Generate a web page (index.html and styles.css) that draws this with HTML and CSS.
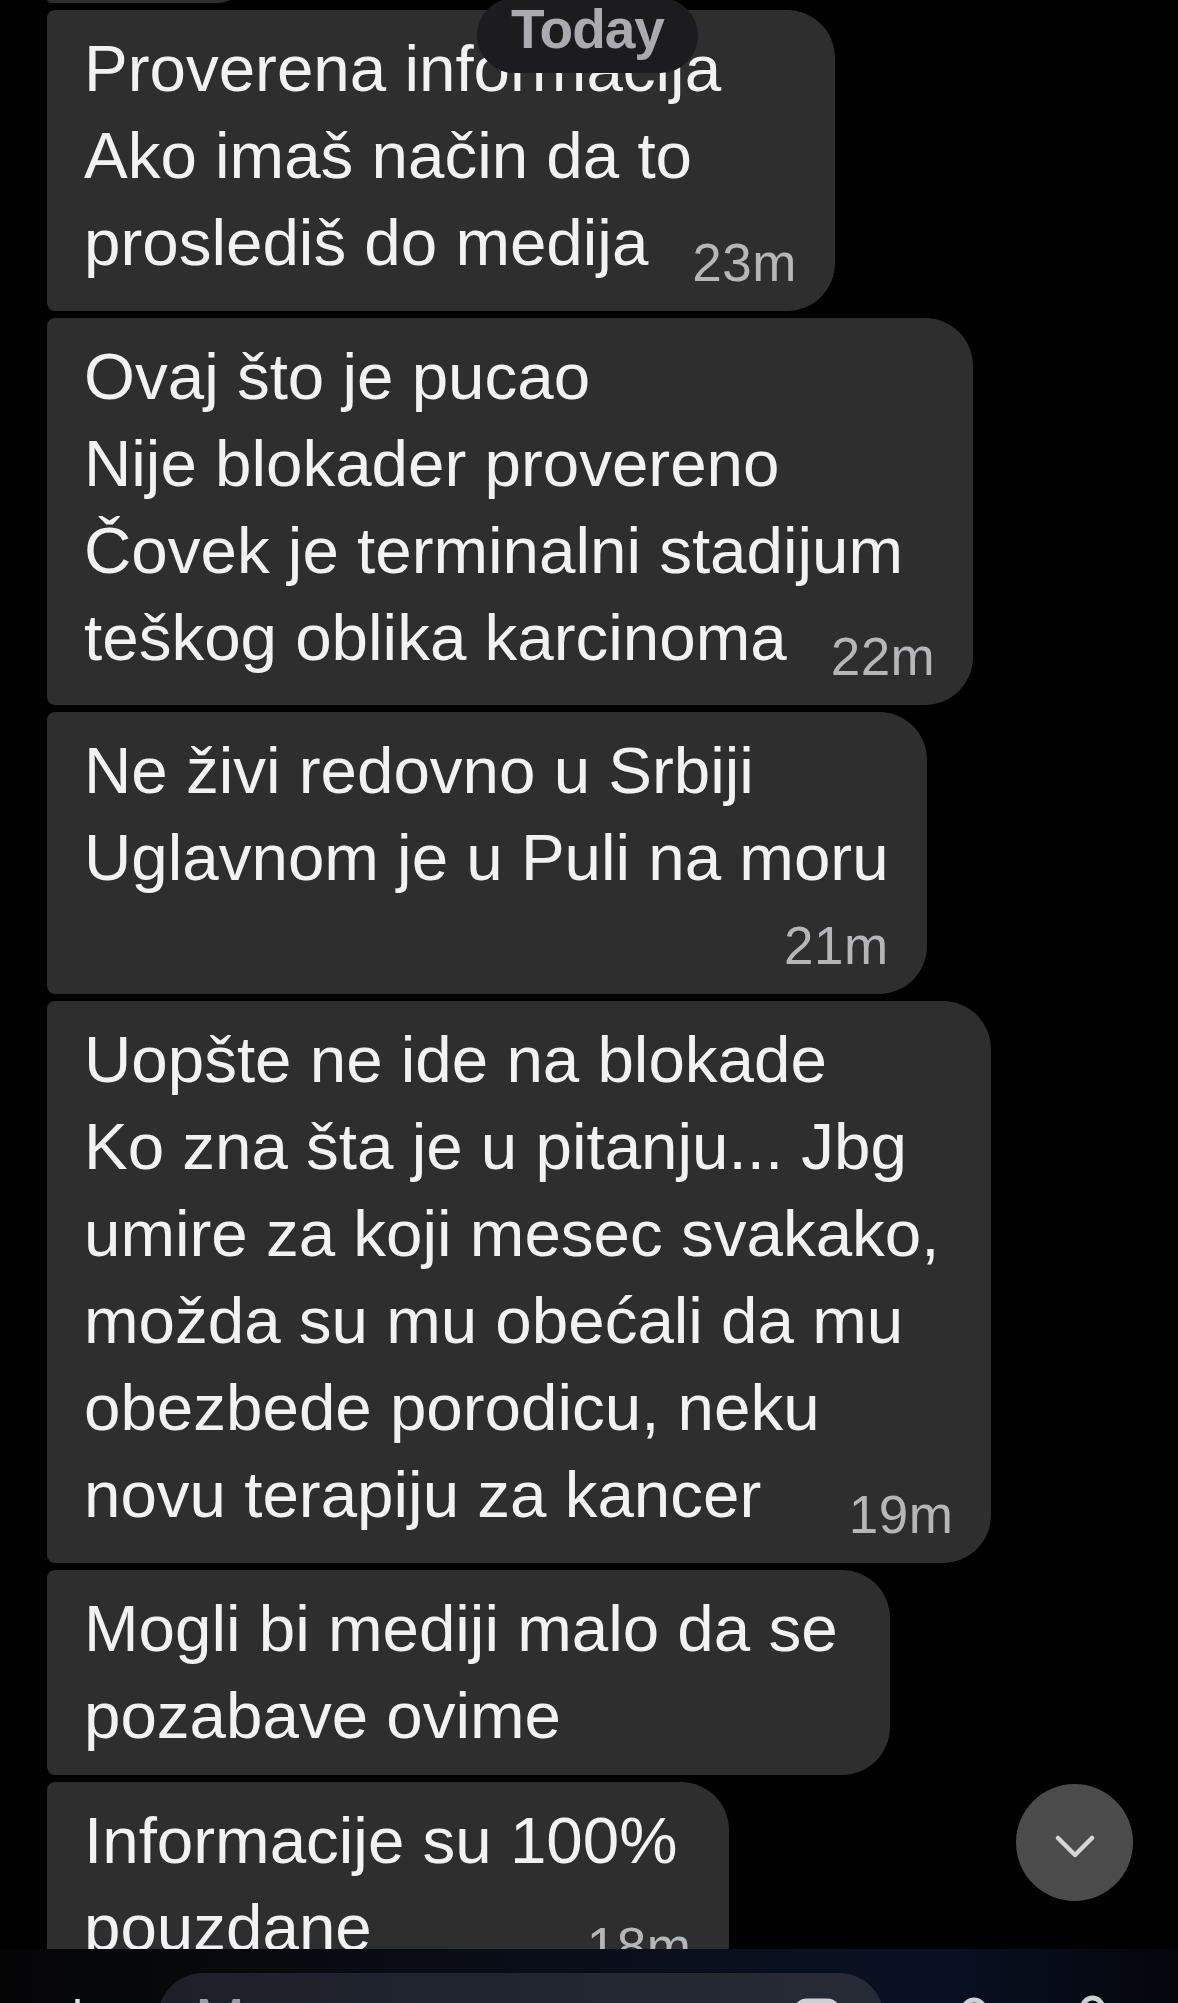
FILE: index.html
```html
<!DOCTYPE html>
<html lang="sr">
<head>
  <meta charset="UTF-8" />
  <title>Poruke</title>
  <link rel="stylesheet" href="styles.css">
</head>
<body>

  <div class="thread">
    <div class="msg msg-stub"></div>

    <div class="msg">
      <div class="line">Proverena informacija</div>
      <div class="line">Ako imaš način da to</div>
      <div class="row"><span class="line">prosledi&#353; do medija</span><span class="time">23m</span></div>
    </div>

    <div class="msg">
      <div class="line">Ovaj što je pucao</div>
      <div class="line">Nije blokader provereno</div>
      <div class="line">Čovek je terminalni stadijum</div>
      <div class="row"><span class="line">teškog oblika karcinoma</span><span class="time">22m</span></div>
    </div>

    <div class="msg msg-tight">
      <div class="line">Ne živi redovno u Srbiji</div>
      <div class="line">Uglavnom je u Puli na moru</div>
      <div class="time time-below">21m</div>
    </div>

    <div class="msg">
      <div class="line">Uopšte ne ide na blokade</div>
      <div class="line">Ko zna šta je u pitanju... Jbg</div>
      <div class="line">umire za koji mesec svakako,</div>
      <div class="line">možda su mu obećali da mu</div>
      <div class="line">obezbede porodicu, neku</div>
      <div class="row"><span class="line">novu terapiju za kancer</span><span class="time">19m</span></div>
    </div>

    <div class="msg">
      <div class="line">Mogli bi mediji malo da se</div>
      <div class="line">pozabave ovime</div>
    </div>

    <div class="msg">
      <div class="line">Informacije su 100%</div>
      <div class="row"><span class="line">pouzdane</span><span class="time">18m</span></div>
    </div>
  </div>

  <!-- plutajuce oznake preko liste -->
  <div class="day-pill">Today</div>

  <button class="scroll-btn" aria-label="Na dno">
    <svg width="48" height="30" viewBox="0 0 48 30">
      <polyline points="7,6 24,23 41,6" fill="none" stroke="#d6d6d6" stroke-width="4.5" stroke-linecap="round" stroke-linejoin="round"/>
    </svg>
  </button>

  <div class="composer">
    <div class="plus">+</div>
    <div class="input">
      <span class="placeholder">Message...</span>
      <svg class="input-icon" width="50" height="50" viewBox="0 0 50 50">
        <rect x="3" y="3" width="44" height="44" rx="12" fill="none" stroke="#d0d0d4" stroke-width="5"/>
      </svg>
    </div>
    <div class="tools">
      <svg class="mic" width="38" height="40" viewBox="0 0 38 40">
        <rect x="8" y="3" width="22" height="36" rx="11" fill="none" stroke="#d0d0d4" stroke-width="5"/>
      </svg>
      <svg class="cam" width="27" height="40" viewBox="0 0 27 40">
        <circle cx="13.5" cy="13" r="10" fill="none" stroke="#d0d0d4" stroke-width="5"/>
      </svg>
    </div>
  </div>

</body>
</html>
```

FILE: styles.css
```css
* {
  box-sizing: border-box;
}
body {
  margin: 0;
  height: 2003px;
  overflow: hidden;
  position: relative;
  background-color: #000;
  color: #f2f2f2;
  font-family: "Liberation Sans", Arial, sans-serif;
}
.thread {
  display: flex;
  flex-direction: column;
  align-items: flex-start;
  gap: 7px;
  padding-left: 47px;
}
.msg {
  background-color: #2e2e2e;
  border-radius: 8px 48px 48px 8px;
  padding: 15px 52px 16px 37px;
  font-size: 65.5px;
  line-height: 87px;
  white-space: nowrap;
}
.msg-tight {
  padding-right: 38px;
}
.msg-stub {
  width: 196px;
  height: 50px;
  margin-top: -47px;
  padding: 0;
}
.row {
  display: flex;
  align-items: flex-start;
}
.time {
  font-size: 53px;
  letter-spacing: 0.5px;
  line-height: 65px;
  color: #b6b6b8;
  margin-top: 30.5px;
  margin-left: auto;
  margin-right: -14px;
  padding-left: 44px;
}
.time-below {
  text-align: right;
  margin-top: 12px;
  margin-right: 0;
  padding-left: 0;
}
.day-pill {
  position: absolute;
  left: 477px;
  top: -2px;
  width: 221px;
  height: 75px;
  border-radius: 38px;
  background-color: #1c1c1e;
  color: #aaaab0;
  font-size: 55px;
  font-weight: bold;
  letter-spacing: -1px;
  line-height: 62px;
  text-align: center;
}
.scroll-btn {
  position: absolute;
  left: 1016px;
  top: 1784px;
  width: 117px;
  height: 117px;
  border: none;
  border-radius: 50%;
  background-color: #4b4b4b;
  padding: 8px 0 0;
  display: flex;
  align-items: center;
  justify-content: center;
}
.composer {
  position: absolute;
  left: 0;
  right: 0;
  bottom: 0;
  height: 54px;
  display: flex;
  align-items: flex-start;
  padding-top: 24px;
  background: linear-gradient(90deg, #050506 0%, #0a0e18 45%, #081022 80%, #04060c 100%);
}
.plus {
  width: 158px;
  padding-left: 60px;
  margin-top: 20px;
  font-size: 60px;
  line-height: 40px;
  color: #e0e0e4;
}
.input {
  width: 726px;
  height: 90px;
  border-radius: 45px;
  background: linear-gradient(90deg, #1d2029, #262b36);
  display: flex;
  align-items: flex-start;
  padding: 17px 42px 0 37px;
}
.placeholder {
  flex: 1;
  font-size: 60px;
  line-height: 60px;
  color: #9c9ca4;
}
.input-icon {
  margin-top: 8px;
}
.tools {
  display: flex;
  gap: 86px;
  padding-left: 71px;
}
.mic {
  margin-top: 24px;
}
.cam {
  margin-top: 22px;
}
```
